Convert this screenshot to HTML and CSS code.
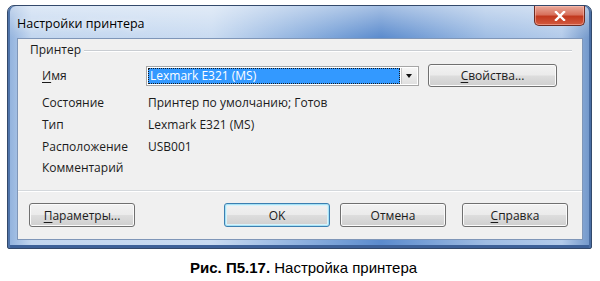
FILE: index.html
```html
<!DOCTYPE html>
<html lang="ru">
<head>
  <meta charset="UTF-8">
  <title>Настройки принтера</title>
  <link rel="stylesheet" href="styles.css">
</head>
<body>
  <div class="window">
    <div class="titlebar">
      <span class="title">Настройки принтера</span>
      <div class="close">
        <svg width="12" height="10" viewBox="0 0 12 10">
          <path d="M2 1 L10 9 M10 1 L2 9" stroke="#fff" stroke-width="2.4" stroke-linecap="square"/>
        </svg>
      </div>
    </div>
    <div class="client">
      <div class="group-head">
        <span>Принтер</span>
        <span class="rule"></span>
      </div>
      <div class="name-row">
        <span class="label"><u>И</u>мя</span>
        <div class="select">
          <span class="select-value">Lexmark E321 (MS)</span>
          <span class="select-arrow"></span>
        </div>
        <button class="btn wide"><u>С</u>войства...</button>
      </div>
      <div class="info">
        <span class="label">Состояние</span><span class="value">Принтер по умолчанию; Готов</span>
        <span class="label">Тип</span><span class="value">Lexmark E321 (MS)</span>
        <span class="label">Расположение</span><span class="value">USB001</span>
        <span class="label">Комментарий</span><span class="value"></span>
      </div>
      <div class="actions">
        <button class="btn"><u>П</u>араметры...</button>
        <div class="actions-right">
          <button class="btn default">OK</button>
          <button class="btn">Отмена</button>
          <button class="btn help"><u>С</u>правка</button>
        </div>
      </div>
    </div>
  </div>
  <p class="caption"><b>Рис. П5.17.</b> Настройка принтера</p>
</body>
</html>
```

FILE: styles.css
```css
/* Page */
body {
  margin: 0;
  background: #fff;
  font-family: 'Open Sans', 'Noto Sans', sans-serif;
  font-size: 12px;
  color: #1b1b1b;
}

u {
  text-decoration: underline;
  text-underline-offset: 2px;
}

/* Window frame */
.window {
  margin: 5px 0 0 7px;
  width: 585px;
  height: 244px;
  box-sizing: border-box;
  padding: 0 8px 8px 9px;
  display: flex;
  flex-direction: column;
  border: 1px solid #33496b;
  border-radius: 7px 7px 2px 2px;
  background:
    linear-gradient(180deg, rgba(255, 255, 255, 0.45) 0, rgba(255, 255, 255, 0) 32px),
    linear-gradient(90deg, #8fb0dc 0%, #c2d6ef 4%, #c9dbf1 35%, #79a2d8 56%, #5b8bcd 64%, #9fbde4 82%, #b3cbea 95%, #6f95c9 100%);
  box-shadow: inset 2px 0 0 #4f74aa, inset -2px 0 0 #4a6ea4, inset 0 -3px 0 #3d6199;
}

/* Title bar */
.titlebar {
  height: 32px;
  display: flex;
  justify-content: space-between;
  align-items: flex-start;
}

.title {
  margin: 9px 0 0 0;
  font-size: 12.5px;
  color: #000;
  text-shadow: 0 0 6px rgba(255, 255, 255, 0.9);
}

.close {
  width: 49px;
  height: 19px;
  margin-right: -2px;
  display: flex;
  justify-content: center;
  align-items: center;
  border: 1px solid #6d2b22;
  border-top: none;
  border-radius: 0 0 5px 5px;
  background: linear-gradient(180deg, #e9a99a 0%, #d8715d 45%, #c2391f 55%, #d35a3f 100%);
  box-shadow: inset 0 0 0 1px rgba(255, 200, 190, 0.5);
}

/* Client area */
.client {
  flex: 1;
  display: flex;
  flex-direction: column;
  background: #f0f0f0;
  border: 1px solid #7f96b8;
}

.group-head {
  height: 20px;
  display: flex;
  align-items: center;
  gap: 3px;
  padding: 0 10px 0 12px;
}

.rule {
  flex: 1;
  height: 1px;
  margin-top: 3px;
  background: #c9cdd2;
  box-shadow: 0 1px 0 #fff;
}

.name-row {
  display: flex;
  align-items: center;
  margin: 5px 0 0 24px;
}

.label {
  width: 104px;
}

.select {
  width: 273px;
  height: 20px;
  box-sizing: border-box;
  display: flex;
  border: 1px solid #a6a6a6;
  background: #fff;
  padding: 1px;
}

.select-value {
  flex: 1;
  padding-left: 2px;
  line-height: 16px;
  color: #fff;
  background: #3399ff;
  outline: 1px dotted #1a1a1a;
  outline-offset: -1px;
}

.select-arrow {
  width: 15px;
  margin-left: 1px;
  position: relative;
  background: linear-gradient(180deg, #f6f6f6, #e0e0e0);
  border-left: 1px solid #c4c4c4;
}

.select-arrow::after {
  content: '';
  position: absolute;
  left: 4px;
  top: 6px;
  border: 3.5px solid transparent;
  border-top: 4px solid #111;
}

/* Info rows */
.info {
  display: grid;
  grid-template-columns: 106px 1fr;
  grid-auto-rows: 21.7px;
  align-items: center;
  margin: 5px 0 0 24px;
}

.info .label {
  width: auto;
}

/* Buttons */
.btn {
  width: 106px;
  height: 24px;
  font-family: inherit;
  font-size: 12px;
  color: #1b1b1b;
  border: 1px solid #707070;
  border-radius: 3px;
  background: linear-gradient(180deg, #f2f2f2 0%, #ebebeb 48%, #dddddd 52%, #cfcfcf 100%);
  box-shadow: inset 0 0 0 1px #fbfbfb;
  padding: 0;
}

.btn.wide {
  width: 129px;
  height: 23px;
  margin-left: 9px;
}

.btn.default {
  border-color: #3c7fb1;
  box-shadow: inset 0 0 0 1px #a6e2f5, inset 0 0 0 2px #d9f2fb;
}

.btn.help {
  margin-left: 6px;
}

.actions {
  margin-top: auto;
  height: 49px;
  box-sizing: border-box;
  display: flex;
  align-items: flex-start;
  padding: 12px 14px 0 11px;
  border-top: 1px solid #d4d8dc;
  box-shadow: inset 0 1px 0 #fff;
}

.actions-right {
  margin-left: auto;
  display: flex;
  gap: 10px;
}

/* Figure caption */
.caption {
  margin: 10px 0 0 190px;
  font-family: 'Liberation Sans', Arial, sans-serif;
  font-size: 15px;
  color: #000;
}
```
